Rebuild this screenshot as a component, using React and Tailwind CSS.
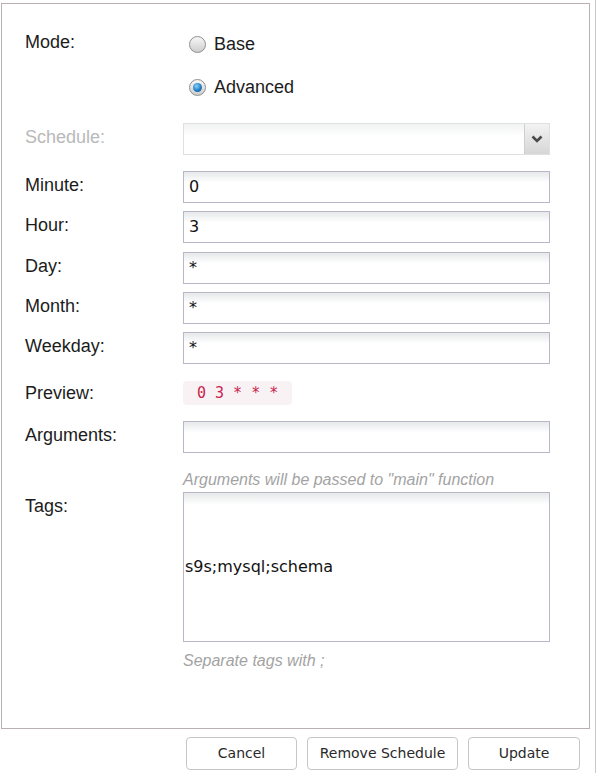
import React from 'react';

const labelCls =
  "w-[158px] shrink-0 h-[28px] leading-[28px] text-[18px] text-[#1c1c1c] font-['Liberation_Sans',Arial,sans-serif]";

const inputCls =
  "w-[367px] h-[32px] border border-[#b7b7c7] bg-[linear-gradient(to_bottom,#e6e8e9,#ffffff_35%)] flex items-center pl-[5px] text-[16px] text-[#111] font-['DejaVu_Sans',Verdana,sans-serif]";

function Radio({ checked, label }) {
  return (
    <div className="flex items-center h-[32px] pl-[6px]">
      <div className="w-[17px] h-[17px] rounded-full border border-[#8e8e8e] bg-[linear-gradient(to_bottom,#f7f7f7,#cdcdcd)] flex items-center justify-center">
        {checked && (
          <div className="w-[9px] h-[9px] rounded-full bg-[radial-gradient(circle_at_40%_35%,#8fd0f5,#1f7fc4_55%,#0b4f8a)]" />
        )}
      </div>
      <span className="ml-[8px] text-[18px] text-[#1c1c1c] font-['Liberation_Sans',Arial,sans-serif]">
        {label}
      </span>
    </div>
  );
}

function Field({ label, value, className = '' }) {
  return (
    <div className={`flex items-start h-[32px] ${className}`}>
      <div className={labelCls}>{label}</div>
      <div className={inputCls}>{value}</div>
    </div>
  );
}

export default function App() {
  return (
    <div className="w-[596px] h-[773px] bg-white border-r border-[#cfc6ca] overflow-hidden">
      <div className="ml-[1px] mt-[3px] w-[589px] h-[726px] border border-[#b9afb4] pl-[23px] pt-[24px]">
        {/* MODE */}
        <div className="flex items-start h-[32px]">
          <div className={labelCls}>Mode:</div>
          <Radio label="Base" />
        </div>
        <div className="flex items-start h-[32px] mt-[11px]">
          <div className="w-[158px] shrink-0" />
          <Radio checked label="Advanced" />
        </div>

        {/* SCHEDULE (disabled) */}
        <div className="flex items-start h-[32px] mt-[20px]">
          <div className={`${labelCls} !text-[#b9b9b9]`}>Schedule:</div>
          <div className="w-[367px] h-[32px] border border-[#e0e0e0] bg-[linear-gradient(to_bottom,#f1f2f2,#ffffff_40%)] flex justify-end">
            <div className="w-[25px] h-full border-l border-[#cfcfcf] bg-[linear-gradient(to_bottom,#f3f3f3,#d6d6d6)] flex items-center justify-center">
              <svg width="12" height="8" viewBox="0 0 12 8">
                <path d="M1.5 1.5 L6 6 L10.5 1.5" fill="none" stroke="#4a4a4a" strokeWidth="2.6" />
              </svg>
            </div>
          </div>
        </div>

        <Field label="Minute:" value="0" className="mt-[16px]" />
        <Field label="Hour:" value="3" className="mt-[8px]" />
        <Field label="Day:" value="*" className="mt-[9px]" />
        <Field label="Month:" value="*" className="mt-[8px]" />
        <Field label="Weekday:" value="*" className="mt-[8px]" />

        {/* PREVIEW */}
        <div className="flex items-start h-[32px] mt-[13px]">
          <div className={`${labelCls} mt-[2px]`}>Preview:</div>
          <div className="mt-[4px] h-[24px] px-[14px] rounded-[4px] bg-[#f9f2f4] text-[#c7254e] text-[15px] leading-[24px] font-['DejaVu_Sans_Mono',monospace] whitespace-pre">
            0 3 * * *
          </div>
        </div>

        <Field label="Arguments:" value="" className="mt-[12px]" />
        <div className="ml-[158px] mt-[17px] h-[20px] leading-[20px] text-[16px] italic text-[#a3a3a3] font-['Liberation_Sans',Arial,sans-serif]">
          Arguments will be passed to "main" function
        </div>

        {/* TAGS */}
        <div className="flex items-start mt-[2px]">
          <div className={labelCls}>Tags:</div>
          <div className="w-[367px] h-[150px] border border-[#b7b7c7] bg-[linear-gradient(to_bottom,#e6e8e9,#ffffff_8%)] flex items-center pl-[1px] text-[16px] text-[#111] font-['DejaVu_Sans',Verdana,sans-serif]">
            s9s;mysql;schema
          </div>
        </div>
        <div className="ml-[158px] mt-[9px] h-[20px] leading-[20px] text-[16px] italic text-[#a3a3a3] font-['Liberation_Sans',Arial,sans-serif]">
          Separate tags with ;
        </div>
      </div>

      {/* BUTTONS */}
      <div className="mt-[8px] flex justify-end pr-[15px] gap-[10px] text-[14px] text-[#2a2a2a] font-['DejaVu_Sans',Verdana,sans-serif]">
        <button className="w-[111px] h-[33px] rounded-[4px] border border-[#c6c6c6] bg-white">Cancel</button>
        <button className="w-[151px] h-[33px] rounded-[4px] border border-[#c6c6c6] bg-white">Remove Schedule</button>
        <button className="w-[112px] h-[33px] rounded-[4px] border border-[#c6c6c6] bg-white">Update</button>
      </div>
    </div>
  );
}
